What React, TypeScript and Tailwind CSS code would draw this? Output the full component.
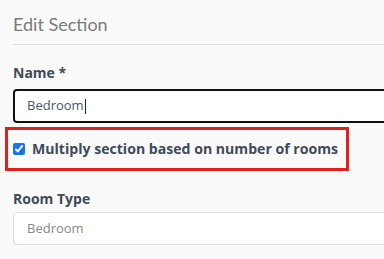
export default function App() {
  return (
    <div
      className="min-h-[259px] w-[384px] overflow-hidden bg-[#fafafa] pl-[13px]"
      style={{ fontFamily: "'Open Sans', Lato, sans-serif" }}
    >
      <div className="border-b border-[#dddddd] pt-[14px] pb-[10px]">
        <h2
          className="text-[18px] leading-[20px] font-normal text-[#7a7a7a]"
          style={{ fontFamily: "Lato, sans-serif" }}
        >
          Edit Section
        </h2>
      </div>

      <label className="mt-[19px] block text-[14px] leading-[17px] font-bold text-[#3e4a59]">
        Name *
      </label>
      <div className="mt-[8px] flex h-[34px] w-[380px] items-center rounded-[4px] border-2 border-[#111111] bg-white pl-[12px]">
        <span className="text-[13px] text-[#4a5568]">Bedroom</span>
        <span className="ml-px h-[15px] w-px bg-[#222]" />
      </div>

      <div className="-ml-[8px] mt-[4px] flex h-[44px] w-[344px] items-center border-[3px] border-[#e41e1e] pl-[5px]">
        <input
          type="checkbox"
          defaultChecked
          className="h-[12px] w-[12px] accent-[#1a73e8]"
        />
        <span className="ml-[7px] text-[14.1px] font-bold text-[#3e4a59]">
          Multiply section based on number of rooms
        </span>
      </div>

      <label className="mt-[19px] block text-[14px] leading-[17px] font-bold text-[#3e4a59]">
        Room Type
      </label>
      <div className="mt-[5px] flex h-[33px] w-[380px] items-center rounded-[4px] border border-[#dddddd] bg-white pl-[13px]">
        <span className="text-[13px] text-[#888888]">Bedroom</span>
      </div>
    </div>
  );
}
